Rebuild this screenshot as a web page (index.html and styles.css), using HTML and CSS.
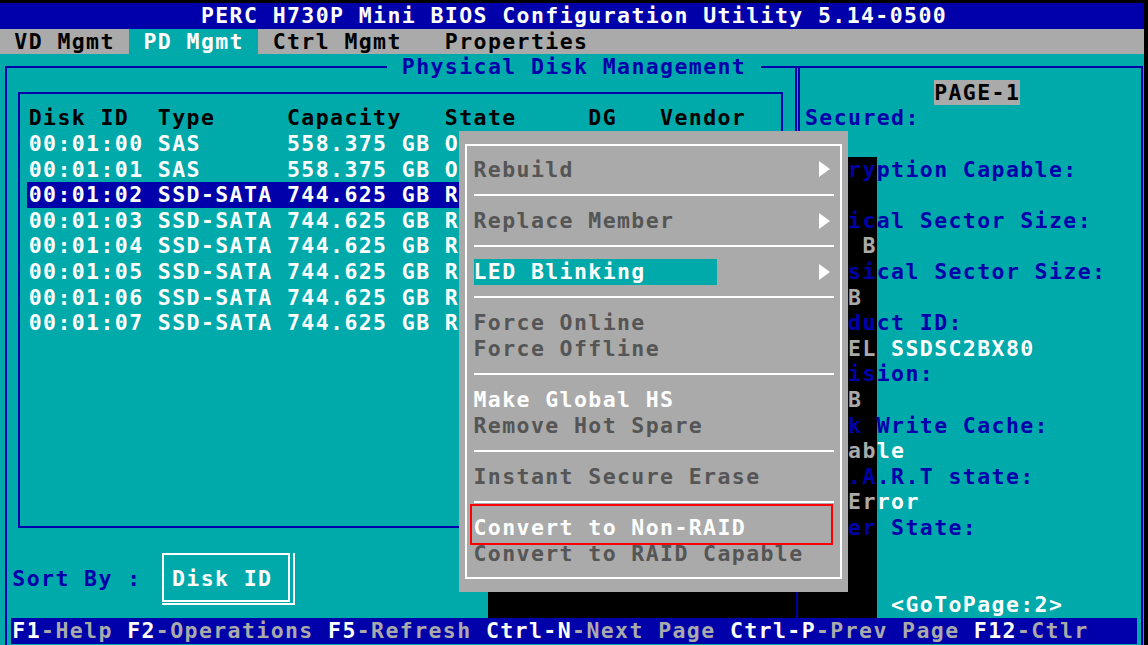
FILE: index.html
```html
<!DOCTYPE html>
<html>
<head>
<meta charset="utf-8">
<title>PERC H730P Mini BIOS Configuration Utility</title>
<link rel="stylesheet" href="styles.css">
</head>
<body>
<div class="screen">
  <div class="title">              PERC H730P Mini BIOS Configuration Utility 5.14-0500</div>
  <div class="menubar"> VD Mgmt <span class="tab-on"> PD Mgmt </span> Ctrl Mgmt   Properties</div>
  <div class="body">
    <div class="frame">
      <div class="legend"> Physical Disk Management </div>
      <div class="panes">
        <div class="left">
          <div class="tablebox">
            <div class="trow thead">Disk ID  Type     Capacity   State     DG   Vendor</div>
            <div class="trow">00:01:00 SAS      558.375 GB O</div>
            <div class="trow">00:01:01 SAS      558.375 GB O</div>
            <div class="trow tsel">00:01:02 SSD-SATA 744.625 GB R</div>
            <div class="trow">00:01:03 SSD-SATA 744.625 GB R</div>
            <div class="trow">00:01:04 SSD-SATA 744.625 GB R</div>
            <div class="trow">00:01:05 SSD-SATA 744.625 GB R</div>
            <div class="trow">00:01:06 SSD-SATA 744.625 GB R</div>
            <div class="trow">00:01:07 SSD-SATA 744.625 GB R</div>
          </div>
          <div class="sortrow">
            <span class="sortlabel">Sort By :</span>
            <div class="btn-outer"><div class="btn-inner">Disk ID</div></div>
          </div>
        </div>
        <div class="divider"></div>
        <div class="right">
          <div class="rrow">         <span class="page">PAGE-1</span></div>
          <div class="rrow">Secured:</div>
          <div class="rrow val"> </div>
          <div class="rrow">   <span class="sh">ry</span>ption Capable:</div>
          <div class="rrow val">   <span class="sh">  </span></div>
          <div class="rrow">   <span class="sh">ic</span>al Sector Size:</div>
          <div class="rrow val">   <span class="sh"> B</span></div>
          <div class="rrow">   <span class="sh">si</span>cal Sector Size:</div>
          <div class="rrow val">   <span class="sh">B </span></div>
          <div class="rrow">   <span class="sh">du</span>ct ID:</div>
          <div class="rrow val">   <span class="sh">EL</span> SSDSC2BX80</div>
          <div class="rrow">   <span class="sh">is</span>ion:</div>
          <div class="rrow val">   <span class="sh">B </span></div>
          <div class="rrow">   <span class="sh">k </span>Write Cache:</div>
          <div class="rrow val">   <span class="sh">ab</span>le</div>
          <div class="rrow">   <span class="sh">.A</span>.R.T state:</div>
          <div class="rrow val">   <span class="sh">Er</span>ror</div>
          <div class="rrow">   <span class="sh">er</span> State:</div>
          <div class="rrow val">   <span class="sh">  </span></div>
          <div class="rrow">   <span class="sh">  </span></div>
          <div class="rrow val">      &lt;GoToPage:2&gt;</div>
        </div>
      </div>
      <div class="status"><span class="key">F1</span>-Help <span class="key">F2</span>-Operations <span class="key">F5</span>-Refresh <span class="key">Ctrl-N</span>-Next Page <span class="key">Ctrl-P</span>-Prev Page <span class="key">F12</span>-Ctlr</div>
    </div>
  </div>

  <div class="menu">
    <div class="menu-frame">
      <div class="mi"><span>Rebuild</span><i class="arrow"></i></div>
      <div class="sep"></div>
      <div class="mi"><span>Replace Member</span><i class="arrow"></i></div>
      <div class="sep"></div>
      <div class="mi"><span class="hl">LED Blinking</span><i class="arrow"></i></div>
      <div class="sep"></div>
      <div class="mi"><span>Force Online</span></div>
      <div class="mi"><span>Force Offline</span></div>
      <div class="sep"></div>
      <div class="mi en"><span>Make Global HS</span></div>
      <div class="mi"><span>Remove Hot Spare</span></div>
      <div class="sep"></div>
      <div class="mi"><span>Instant Secure Erase</span></div>
      <div class="sep"></div>
      <div class="mi en"><span>Convert to Non-RAID</span></div>
      <div class="mi"><span>Convert to RAID Capable</span></div>
    </div>
    <div class="redbox"></div>
  </div>
  <div class="shadow-bottom"></div>
</div>
</body>
</html>
```

FILE: styles.css
```css
:root {
  --cw: 14.35px;
  --rh: 25.6px;
  --cyan: #00aaaa;
  --blue: #0000aa;
  --gray: #aaaaaa;
  --dgray: #555555;
}

* {
  box-sizing: border-box;
  margin: 0;
  padding: 0;
}

html, body {
  background: #000;
}

body {
  width: 1148px;
  height: 645px;
  overflow: hidden;
  font-family: "DejaVu Sans Mono", "Liberation Mono", monospace;
  font-weight: bold;
  font-size: 21.5px;
  letter-spacing: 1.406px;
  line-height: 25.6px;
  color: #fff;
}

.screen {
  position: relative;
  width: 1144px;
  height: 645px;
  padding-top: 3px;
  display: flex;
  flex-direction: column;
}

.title,
.menubar,
.legend,
.trow,
.rrow,
.status,
.sortlabel,
.btn-inner,
.mi span {
  white-space: pre;
}

.title {
  height: var(--rh);
  background: var(--blue);
  color: #fff;
}

.menubar {
  height: var(--rh);
  background: var(--gray);
  color: #000;
}

.tab-on {
  display: inline-block;
  height: var(--rh);
  vertical-align: top;
  background: var(--cyan);
  color: #fff;
}

.body {
  flex: 1;
  background: var(--cyan);
  padding: 11.8px 1px 0 5px;
  display: flex;
  flex-direction: column;
}

.frame {
  flex: 1;
  position: relative;
  border: 2px solid var(--blue);
  border-bottom: 0;
  display: flex;
  flex-direction: column;
}

.legend {
  position: absolute;
  left: 380.45px;
  top: -13.8px;
  height: var(--rh);
  background: var(--cyan);
  color: var(--blue);
}

.panes {
  height: 550px;
  display: grid;
  grid-template-columns: 788px 5px 1fr;
}

.left {
  display: flex;
  flex-direction: column;
}

.tablebox {
  margin: 24px 0 0 11px;
  width: 765px;
  height: 436px;
  border: 2px solid var(--blue);
  padding: 11.4px 0 0 8.7px;
}

.trow {
  height: var(--rh);
  color: #fff;
}

.thead {
  color: #000;
}

.tsel {
  margin-left: -2px;
  padding-left: 2px;
  background: var(--blue);
}

.sortrow {
  margin-top: 25px;
  display: flex;
  align-items: flex-start;
}

.sortlabel {
  margin: 13.2px 0 0 5.35px;
  color: var(--blue);
  height: var(--rh);
}

.btn-outer {
  margin-left: 20.5px;
  border-right: 2px solid #fff;
  border-bottom: 2px solid #fff;
  padding: 0 3px 1px 0;
}

.btn-inner {
  width: 128px;
  height: 49px;
  border: 2px solid #fff;
  padding: 11.2px 0 0 8px;
  color: #fff;
}

.divider {
  border-left: 2px solid var(--blue);
  border-right: 2px solid var(--blue);
}

.right {
  padding: 11.8px 0 0 5px;
  color: var(--blue);
}

.rrow {
  height: var(--rh);
}

.val {
  color: #fff;
}

.sh {
  display: inline-block;
  height: var(--rh);
  vertical-align: top;
  background: #000;
}

.val .sh {
  color: var(--gray);
}

.page {
  display: inline-block;
  height: var(--rh);
  vertical-align: top;
  background: var(--gray);
  color: #000;
}

.status {
  height: var(--rh);
  margin: 0 4px;
  background: var(--blue);
  color: var(--gray);
  padding-left: 1.35px;
}

.key {
  color: #fff;
}

/* popup menu over the list */
.menu {
  position: absolute;
  left: 459px;
  top: 131px;
  width: 389px;
  height: 461px;
  background: var(--gray);
  padding: 13px 6px;
}

.menu-frame {
  height: 100%;
  border: 2px solid #fff;
  padding: 10.6px 6px 0 6.5px;
}

.mi {
  height: var(--rh);
  display: flex;
  align-items: center;
  justify-content: space-between;
  color: var(--dgray);
}

.mi.en {
  color: #fff;
}

.mi .hl {
  width: calc(17 * var(--cw));
  height: var(--rh);
  background: var(--cyan);
  color: #fff;
}

.arrow {
  width: 0;
  height: 0;
  border-left: 11px solid #fff;
  border-top: 8.5px solid transparent;
  border-bottom: 8.5px solid transparent;
  margin-right: 4px;
}

.sep {
  height: var(--rh);
  display: flex;
  align-items: center;
}

.sep::before {
  content: "";
  flex: 1;
  height: 2px;
  background: #fff;
}

.redbox {
  position: absolute;
  left: 11px;
  top: 373px;
  width: 363px;
  height: 41px;
  border: 2px solid #ff0000;
}

.shadow-bottom {
  position: absolute;
  left: 488px;
  top: 591.8px;
  width: 389px;
  height: 26.2px;
  background: #000;
  padding-left: 308px;
}

.shadow-bottom::before {
  content: "";
  display: block;
  width: 2px;
  height: 100%;
  background: var(--blue);
}
```
